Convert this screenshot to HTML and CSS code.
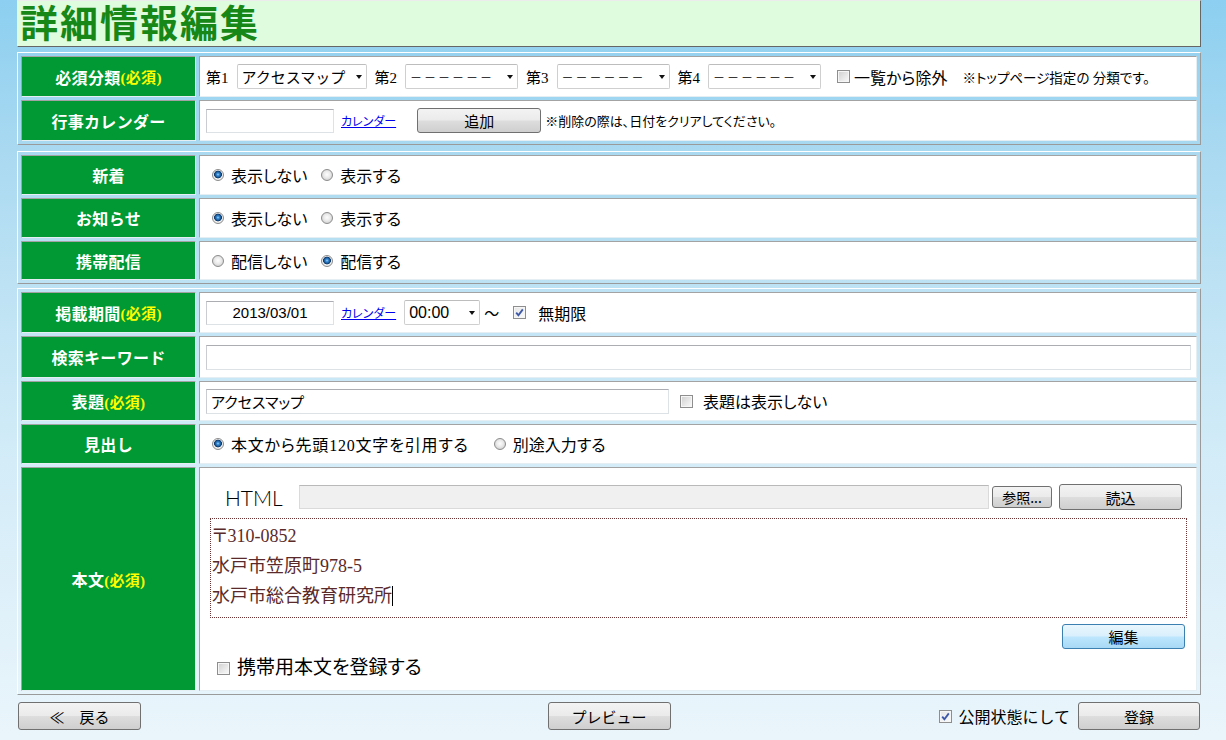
FILE: index.html
```html
<!DOCTYPE html>
<html lang="ja">
<head>
<meta charset="utf-8">
<title>詳細情報編集</title>
<link rel="stylesheet" href="styles.css">
</head>
<body>
<div class="page">
  <header class="title-bar"><h1>詳細情報編集</h1></header>

  <section class="form-block rows-1">
    <div class="label">必須分類<em>(必須)</em></div>
    <div class="value">
      <span class="num">第1</span>
      <span class="select w130"><select><option>アクセスマップ</option></select></span>
      <span class="num">第2</span>
      <span class="select w113"><select class="dash"><option>－－－－－－</option></select></span>
      <span class="num">第3</span>
      <span class="select w113"><select class="dash"><option>－－－－－－</option></select></span>
      <span class="num">第4</span>
      <span class="select w113"><select class="dash"><option>－－－－－－</option></select></span>
      <label class="check exclude"><span class="cb"></span>一覧から除外</label>
      <span class="note">※トップページ指定の 分類です。</span>
    </div>

    <div class="label">行事カレンダー</div>
    <div class="value">
      <input class="text w128" type="text">
      <a class="cal" href="#">カレンダー</a>
      <button class="btn add" type="button">追加</button>
      <span class="note small">※削除の際は、日付をクリアしてください。</span>
    </div>
  </section>

  <section class="form-block rows-2">
    <div class="label">新着</div>
    <div class="value">
      <label class="opt"><span class="rb on"></span>表示しない</label>
      <label class="opt"><span class="rb"></span>表示する</label>
    </div>

    <div class="label">お知らせ</div>
    <div class="value">
      <label class="opt"><span class="rb on"></span>表示しない</label>
      <label class="opt"><span class="rb"></span>表示する</label>
    </div>

    <div class="label">携帯配信</div>
    <div class="value">
      <label class="opt"><span class="rb"></span>配信しない</label>
      <label class="opt"><span class="rb on"></span>配信する</label>
    </div>
  </section>

  <section class="form-block rows-3">
    <div class="label">掲載期間<em>(必須)</em></div>
    <div class="value">
      <input class="text w128 date" type="text" value="2013/03/01">
      <a class="cal gap8" href="#">カレンダー</a>
      <span class="select w76"><select class="time"><option>00:00</option></select></span>
      <span class="tilde">～</span>
      <label class="check wide"><span class="cb on"><svg viewBox="0 0 13 13" width="13" height="13"><path d="M3.2 6.6 L5.4 9.2 L9.8 3.4" fill="none" stroke="#3d58a8" stroke-width="1.8"/></svg></span>無期限</label>
    </div>

    <div class="label">検索キーワード</div>
    <div class="value">
      <input class="text w985" type="text">
    </div>

    <div class="label">表題<em>(必須)</em></div>
    <div class="value">
      <input class="text w463" type="text" value="アクセスマップ">
      <label class="check title-hide"><span class="cb"></span>表題は表示しない</label>
    </div>

    <div class="label">見出し</div>
    <div class="value">
      <label class="opt"><span class="rb on"></span><span class="spaced">本文から先頭120文字を引用する</span></label>
      <label class="opt far"><span class="rb"></span>別途入力する</label>
    </div>

    <div class="label">本文<em>(必須)</em></div>
    <div class="value body-cell">
      <div class="html-row">
        <span class="html-label">HTML</span>
        <span class="file-field"></span>
        <button class="btn browse" type="button">参照...</button>
        <button class="btn load" type="button">読込</button>
      </div>
      <div class="editor">
        <div>〒310-0852</div>
        <div>水戸市笠原町978-5</div>
        <div>水戸市総合教育研究所<span class="caret"></span></div>
      </div>
      <button class="btn edit" type="button">編集</button>
      <label class="mobile"><span class="cb"></span>携帯用本文を登録する</label>
    </div>
  </section>

  <footer class="actions">
    <div class="left"><button class="btn wide-btn" type="button">≪　戻る</button></div>
    <div class="center"><button class="btn wide-btn" type="button">プレビュー</button></div>
    <div class="right">
      <label class="check publish"><span class="cb on"><svg viewBox="0 0 13 13" width="13" height="13"><path d="M3.2 6.6 L5.4 9.2 L9.8 3.4" fill="none" stroke="#3d58a8" stroke-width="1.8"/></svg></span>公開状態にして</label>
      <button class="btn wide-btn reg" type="button">登録</button>
    </div>
  </footer>
</div>
</body>
</html>
```

FILE: styles.css
```css
html {
  background: linear-gradient(to bottom, #8ccff0 0px, #a9d9f1 150px, #bfe3f4 300px, #d3ecf8 460px, #eaf5fb 740px);
  min-height: 100%;
}

body {
  margin: 0;
  min-height: 740px;
  font-family: "Liberation Serif", "Noto Sans CJK JP", serif;
  font-size: 16px;
  color: #000;
}

.page {
  width: 1184px;
  margin-left: 17px;
}

/* ---- title bar ---- */
.title-bar {
  height: 47px;
  box-sizing: border-box;
  background: #dffcdf;
  border: 1px solid;
  border-color: #ececec #666 #666 #e8f4e8;
  display: flex;
  align-items: flex-start;
}

.title-bar h1 {
  margin: 0;
  padding-left: 2px;
  font-family: "Noto Sans CJK JP", sans-serif;
  font-size: 38px;
  line-height: 40px;
  font-weight: 700;
  color: #178717;
  letter-spacing: 2px;
}

/* ---- form blocks ---- */
.form-block {
  display: grid;
  grid-template-columns: 175px 1fr;
  gap: 3px;
  padding: 3px;
  border: 1px solid;
  border-color: #fff #9a9a9a #9a9a9a #fff;
}

.rows-1 { margin-top: 5px; grid-template-rows: 41px 41px; }
.rows-2 { margin-top: 6px; grid-template-rows: 40px 40px 39px; }
.rows-3 { margin-top: 4px; grid-template-rows: 41px 42px 40px 40px 224px; }

.label,
.value {
  box-sizing: border-box;
  border: 1px solid;
  border-color: #a3a3a3 #e4eef3 #e4eef3 #a3a3a3;
}

.label {
  background: #009933;
  color: #fff;
  font-family: "Liberation Serif", "Noto Sans CJK JP", serif;
  font-weight: 700;
  font-size: 16px;
  display: flex;
  align-items: center;
  justify-content: center;
  letter-spacing: 0.3px;
}

.label em {
  font-style: normal;
  color: #ffff00;
  font-size: 15px;
}

.value {
  background: #fff;
  display: flex;
  align-items: center;
  padding-left: 6px;
  font-feature-settings: "palt";
  white-space: nowrap;
}

/* ---- small pieces ---- */
.num { margin-right: 8px; font-size: 15px; }

.select {
  position: relative;
  display: inline-block;
  height: 25px;
  margin-right: 8px;
}
.select select {
  -webkit-appearance: none;
  appearance: none;
  width: 100%;
  height: 100%;
  box-sizing: border-box;
  border: 1px solid #cfcfcf;
  border-top-color: #bdbdbd;
  border-radius: 2px;
  background: #fff;
  padding: 0 16px 0 4px;
  font-family: "Noto Sans CJK JP", sans-serif;
  font-size: 15px;
  color: #000;
}
.select::after {
  content: "";
  position: absolute;
  right: 5px;
  top: 11px;
  border-left: 3.5px solid transparent;
  border-right: 3.5px solid transparent;
  border-top: 4px solid #111;
}
.select select.dash { font-size: 12px; letter-spacing: 2px; }
.select select.time { font-family: "Liberation Sans", sans-serif; font-size: 16px; }

.w130 { width: 130px; }
.w113 { width: 113px; }
.w76 { width: 76px; margin-right: 4px; }

.check {
  display: inline-flex;
  align-items: center;
  font-size: 16px;
}
.check .cb { margin-right: 4px; }
.exclude { margin-left: 8px; }
.wide .cb { margin-right: 12px; }
.wide { margin-left: 14px; }
.title-hide { margin-left: 11px; }
.title-hide .cb { margin-right: 10px; }

.cb {
  display: inline-block;
  width: 13px;
  height: 13px;
  box-sizing: border-box;
  border: 1px solid #8e8e8e;
  background: linear-gradient(135deg, #cfcfcf 0%, #eeeeee 70%, #fafafa 100%);
  box-shadow: inset 0 0 0 1px #f6f6f6;
  flex: none;
  position: relative;
}
.cb.on {
  background: linear-gradient(135deg, #e6e6e6, #fbfbfb);
}
.cb svg {
  position: absolute;
  left: -1px;
  top: -1px;
}

.note {
  margin-left: 15px;
  font-size: 13.5px;
}
.note.small {
  margin-left: 4px;
  font-size: 13px;
}

.text {
  height: 24px;
  box-sizing: border-box;
  border: 1px solid #dde2e7;
  border-top-color: #abadb3;
  border-left-color: #c9ccd2;
  padding: 0 4px;
  font-family: "Noto Sans CJK JP", sans-serif;
  font-feature-settings: "palt";
  font-size: 15px;
  color: #000;
  background: #fff;
}
.w128 { width: 128px; }
.w985 { width: 985px; height: 25px; }
.w463 { width: 463px; height: 25px; }
.date {
  text-align: center;
  font-family: "Liberation Sans", sans-serif;
  font-size: 15px;
}

.cal {
  margin-left: 7px;
  margin-right: 21px;
  font-family: "Noto Sans CJK JP", sans-serif;
  font-size: 12px;
  color: #0000ee;
  text-decoration: underline;
}
.cal.gap8 { margin-right: 8px; }

.tilde { font-size: 15px; }

.btn {
  height: 25px;
  box-sizing: border-box;
  border: 1px solid #707070;
  border-radius: 3px;
  background: linear-gradient(to bottom, #f3f3f3 0%, #ebebeb 48%, #dddddd 52%, #cfcfcf 100%);
  font-family: "Noto Sans CJK JP", sans-serif;
  font-size: 15px;
  line-height: 1;
  color: #000;
  padding: 0;
}
.add { width: 124px; }

/* ---- radios ---- */
.opt {
  display: inline-flex;
  align-items: center;
  font-size: 16px;
  margin-left: 14px;
}
.opt:first-child { margin-left: 6px; }
.opt.far { margin-left: 25px; }
.rb {
  display: inline-block;
  width: 12px;
  height: 12px;
  box-sizing: border-box;
  border-radius: 50%;
  border: 1px solid #8c8c8c;
  background: radial-gradient(circle at 50% 45%, #fdfdfd 0, #ececec 3px, #d0d0d0 6px);
  margin-right: 7px;
  flex: none;
}
.rb.on {
  background: radial-gradient(circle at 50% 45%, #9fd8ff 0, #3f8fd6 1.2px, #1b5e9e 2.6px, #0f3564 3.6px, #f4f4f4 4.2px, #e2e2e2 6px);
}
.spaced { letter-spacing: 0.8px; }

/* ---- body text cell ---- */
.body-cell {
  flex-direction: column;
  align-items: flex-start;
  padding: 16px 9px 0 10px;
}
.html-row {
  display: flex;
  align-items: center;
  height: 26px;
  padding-left: 15px;
}
.html-label {
  width: 57px;
  margin-right: 17px;
  font-family: "Lato", "Liberation Sans", sans-serif;
  font-weight: 300;
  font-size: 21px;
}
.file-field {
  width: 690px;
  height: 24px;
  box-sizing: border-box;
  background: #f0f0f0;
  border: 1px solid #dadada;
  border-top-color: #b9b9b9;
  margin-right: 3px;
}
.browse { width: 60px; height: 22px; margin-right: 7px; font-size: 14px; }
.load { width: 123px; height: 26px; }

.editor {
  width: 977px;
  height: 100px;
  box-sizing: border-box;
  margin-top: 8px;
  border: 1px dotted #6d3535;
  padding: 2px 1px;
  font-size: 18px;
  line-height: 30px;
  color: #5a2a2a;
}
.caret {
  display: inline-block;
  width: 1px;
  height: 20px;
  background: #000;
  vertical-align: -4px;
}
.edit {
  align-self: flex-end;
  margin: 6px 2px 0 0;
  width: 123px;
  height: 25px;
  border-color: #3c7fb1;
  background: linear-gradient(to bottom, #eaf6fd 0%, #d9f0fc 48%, #bee6fd 52%, #a7d9f5 100%);
}
.mobile {
  display: flex;
  align-items: center;
  margin-top: 7px;
  padding-left: 7px;
  font-size: 19px;
  line-height: 24px;
}
.mobile .cb { margin-right: 7px; }

/* ---- footer ---- */
.actions {
  display: grid;
  grid-template-columns: 1fr auto 1fr;
  align-items: center;
  margin-top: 7px;
}
.actions .left { padding-left: 1px; }
.actions .right {
  display: flex;
  justify-content: flex-end;
  align-items: center;
  padding-right: 1px;
}
.wide-btn { width: 123px; height: 28px; }
.reg { width: 122px; }
.publish { font-size: 16px; margin-right: 8px; }
.publish .cb { margin-right: 6px; }
```
